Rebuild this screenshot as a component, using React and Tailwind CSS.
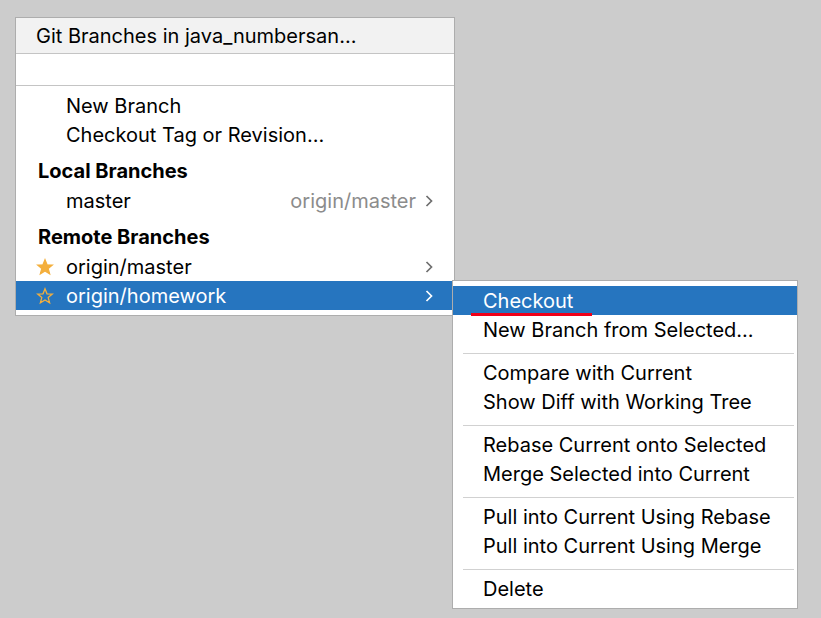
import React from "react";

function Chevron({ color }) {
  return (
    <svg width="10" height="14" viewBox="0 0 10 14" fill="none" stroke={color} strokeWidth="1.7">
      <path d="M2.5 2 7.5 7 2.5 12" />
    </svg>
  );
}

function Star({ filled }) {
  return (
    <svg width="18" height="18" viewBox="0 0 18 18" fill={filled ? "#f4af3d" : "none"} stroke="#f4af3d" strokeWidth="1.3">
      <path d="M9 1.8 11 6.8 16.3 7.1 12.2 10.6 13.6 15.8 9 12.9 4.4 15.8 5.8 10.6 1.7 7.1 7 6.8Z" />
    </svg>
  );
}

function Row({ icon, label, hint, arrow, selected }) {
  return (
    <div className={"flex h-[29px] shrink-0 items-center pl-5 pr-5 " + (selected ? "bg-[#2675bf] text-white" : "")}>
      <span className="flex w-[18px] justify-center">{icon}</span>
      <span className="ml-3 grow">{label}</span>
      {hint && <span className="mr-2 text-[#8c8c8c]">{hint}</span>}
      {arrow && <Chevron color={selected ? "#ffffff" : "#6e6e6e"} />}
    </div>
  );
}

function Heading({ children }) {
  return <div className="mt-1.5 flex h-[31px] shrink-0 items-center pl-[22px] font-bold">{children}</div>;
}

function MenuItem({ children }) {
  return <div className="flex h-[29px] shrink-0 items-center pl-[30px]">{children}</div>;
}

function Separator() {
  return <div className="ml-2.5 mr-[3px] mt-[9px] mb-1 h-px shrink-0 bg-[#d1d1d1]" />;
}

export default function App() {
  return (
    <div className="relative h-[618px] w-[821px] overflow-hidden whitespace-nowrap bg-[#cccccc] font-['Inter',sans-serif] text-[20px] leading-none text-black">
      <div className="absolute left-[15px] top-[17px] flex h-[299px] w-[440px] flex-col border border-[#adadad] bg-white">
        <div className="flex h-9 shrink-0 items-center border-b border-[#c4c4c4] bg-[#f2f2f2] pl-5 pr-3">
          <span className="grow">Git Branches in java_numbersan...</span>
        </div>
        <div className="flex h-8 shrink-0 items-center border-b border-[#c4c4c4] pl-2" />
        <div className="h-[5px] shrink-0" />
        <Row label="New Branch" />
        <Row label="Checkout Tag or Revision..." />
        <Heading>Local Branches</Heading>
        <Row label="master" hint="origin/master" arrow />
        <Heading>Remote Branches</Heading>
        <Row icon={<Star filled />} label="origin/master" arrow />
        <Row icon={<Star />} label="origin/homework" arrow selected />
      </div>
      <div className="absolute left-[452px] top-[280px] flex h-[329px] w-[346px] flex-col border border-[#adadad] bg-white pt-[5px]">
        <div className="relative flex h-[29px] shrink-0 items-center bg-[#2675bf] pl-[30px] text-white">
          Checkout
          <span className="absolute left-[18px] top-[27px] h-[3px] w-[121px] bg-[#f00018]" />
        </div>
        <MenuItem>New Branch from Selected...</MenuItem>
        <Separator />
        <MenuItem>Compare with Current</MenuItem>
        <MenuItem>Show Diff with Working Tree</MenuItem>
        <Separator />
        <MenuItem>Rebase Current onto Selected</MenuItem>
        <MenuItem>Merge Selected into Current</MenuItem>
        <Separator />
        <MenuItem>Pull into Current Using Rebase</MenuItem>
        <MenuItem>Pull into Current Using Merge</MenuItem>
        <Separator />
        <MenuItem>Delete</MenuItem>
      </div>
    </div>
  );
}
